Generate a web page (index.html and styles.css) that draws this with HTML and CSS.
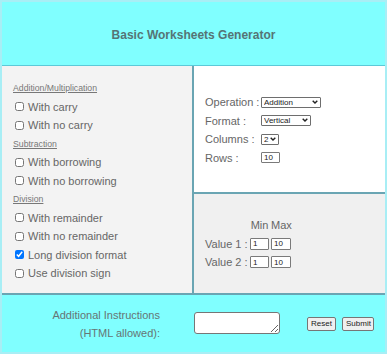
FILE: index.html
```html
<!DOCTYPE html>
<html>
<head>
<meta charset="utf-8">
<link rel="stylesheet" href="styles.css">
</head>
<body>
<div class="page">
  <div class="head"><h1 class="title">Basic Worksheets Generator</h1></div>
  <div class="middle">
    <div class="left">
      <div class="sec">Addition/Multiplication</div>
      <label class="opt"><input type="checkbox" class="cb">With carry</label>
      <label class="opt"><input type="checkbox" class="cb">With no carry</label>
      <div class="sec">Subtraction</div>
      <label class="opt"><input type="checkbox" class="cb">With borrowing</label>
      <label class="opt"><input type="checkbox" class="cb">With no borrowing</label>
      <div class="sec">Division</div>
      <label class="opt"><input type="checkbox" class="cb">With remainder</label>
      <label class="opt"><input type="checkbox" class="cb">With no remainder</label>
      <label class="opt"><input type="checkbox" class="cb" checked>Long division format</label>
      <label class="opt"><input type="checkbox" class="cb">Use division sign</label>
    </div>
    <div class="right">
      <div class="settings">
        <div class="row"><span class="lbl">Operation :</span><span class="sel sel-op"><select class="selbox"><option>Addition</option></select><svg class="chev" viewBox="0 0 6 4"><path d="M0.7 0.7 L3 3 L5.3 0.7" /></svg></span></div>
        <div class="row"><span class="lbl">Format :</span><span class="sel sel-fmt"><select class="selbox"><option>Vertical</option></select><svg class="chev" viewBox="0 0 6 4"><path d="M0.7 0.7 L3 3 L5.3 0.7" /></svg></span></div>
        <div class="row"><span class="lbl">Columns :</span><span class="sel sel-col"><select class="selbox"><option>2</option></select><svg class="chev" viewBox="0 0 6 4"><path d="M0.7 0.7 L3 3 L5.3 0.7" /></svg></span></div>
        <div class="row"><span class="lbl">Rows :</span><input class="num num-rows" type="text" value="10"></div>
      </div>
      <div class="ranges">
        <span></span><span class="colh">Min</span><span class="colh">Max</span>
        <span class="rlbl">Value 1 :</span><input class="num rin" type="text" value="1"><input class="num rin rin2" type="text" value="10">
        <span class="rlbl">Value 2 :</span><input class="num rin" type="text" value="1"><input class="num rin rin2" type="text" value="10">
      </div>
    </div>
  </div>
  <div class="foot">
    <div class="flbl">Additional Instructions<br>(HTML allowed):</div>
    <textarea class="ta"></textarea>
    <button class="btn btn-reset">Reset</button>
    <button class="btn btn-submit">Submit</button>
  </div>
</div>
</body>
</html>
```
FILE: styles.css
```css
* { box-sizing: border-box; }
body {
  margin: 0;
  background: #fff;
  font-family: "Liberation Sans", Arial, sans-serif;
  color: #666;
}
.page {
  width: 387px;
  border: 2px solid #a8eef5;
  background: #fff;
}
.head {
  height: 64px;
  background: #80ffff;
  border-bottom: 1px solid #5cc9d8;
  display: flex;
  align-items: center;
  justify-content: center;
  padding-top: 3px;
}
.title {
  margin: 0;
  font-size: 12px;
  font-weight: bold;
  color: #557475;
}
.middle {
  display: grid;
  grid-template-columns: 192px 1fr;
  height: 227px;
}
.left {
  background: #f3f3f3;
  border-right: 2px solid #6aa5b3;
  padding: 13px 0 0 11px;
  display: flex;
  flex-direction: column;
}
.sec {
  height: 18.5px;
  line-height: 18.5px;
  font-size: 8.7px;
  text-decoration: underline;
  color: #777;
}
.opt {
  height: 18.5px;
  display: flex;
  align-items: center;
  font-size: 11px;
  padding-left: 2px;
}
.cb {
  width: 9px;
  height: 9px;
  margin: 0 4px 0 0;
}
.right {
  display: flex;
  flex-direction: column;
}
.settings {
  height: 128px;
  background: #fff;
  border-bottom: 2px solid #6aa5b3;
  padding: 2px 0 0 11px;
  display: flex;
  flex-direction: column;
  justify-content: center;
}
.row {
  height: 18.6px;
  display: flex;
  align-items: center;
  font-size: 11px;
}
.lbl { width: 56px; }
.sel {
  position: relative;
  display: inline-block;
  height: 11px;
}
.selbox {
  appearance: none;
  -webkit-appearance: none;
  width: 100%;
  height: 11px;
  border: 1px solid #6e6e6e;
  border-radius: 1px;
  background: #fff;
  font-family: "Liberation Sans", Arial, sans-serif;
  font-size: 8px;
  line-height: 9px;
  color: #222;
  padding: 0 0 0 2px;
  margin: 0;
  display: block;
}
.sel-op { width: 60px; }
.sel-fmt { width: 50px; }
.sel-col { width: 18px; }
.chev {
  position: absolute;
  right: 3px;
  top: 3px;
  width: 6px;
  height: 4px;
  fill: none;
  stroke: #222;
  stroke-width: 1.4;
}
.num {
  height: 11px;
  border: 1px solid #7a7a7a;
  border-radius: 1px;
  background: #fff;
  font-family: "Liberation Sans", Arial, sans-serif;
  font-size: 8px;
  color: #222;
  padding: 0 0 0 2px;
  margin: 0;
}
.num-rows { width: 19px; }
.ranges {
  flex: 1;
  background: #f0f0f0;
  padding-left: 11px;
  display: grid;
  grid-template-columns: 43px 19px 20px;
  grid-template-rows: repeat(3, 18.7px);
  column-gap: 2px;
  align-content: center;
  align-items: center;
  font-size: 11px;
}
.colh { text-align: center; }
.rin { width: 19px; height: 12px; }
.rin2 { width: 20px; }
.foot {
  height: 59px;
  background: #80ffff;
  border-top: 2px solid #6aa5b3;
  display: flex;
  align-items: center;
}
.flbl {
  width: 158px;
  text-align: right;
  font-size: 11px;
  line-height: 18px;
  color: #667575;
}
.ta {
  width: 86px;
  height: 22px;
  margin: -2px 0 0 34px;
  border: 1px solid #767676;
  border-radius: 3px;
  background: #fff;
  padding: 1px;
}
.btn {
  height: 14px;
  padding: 0 3px;
  font-family: "Liberation Sans", Arial, sans-serif;
  font-size: 8px;
  color: #222;
  background: #efefef;
  border: 1px solid #767676;
  border-radius: 2px;
  margin: 0;
}
.btn-reset { width: 29px; margin-left: 27px; }
.btn-submit { width: 32px; margin-left: 6px; }
```
